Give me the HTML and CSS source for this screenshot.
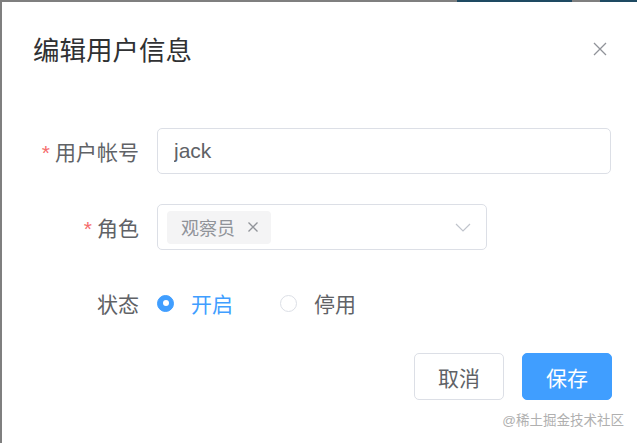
FILE: index.html
```html
<!DOCTYPE html>
<html lang="zh-CN">
<head>
  <meta charset="UTF-8" />
  <meta name="viewport" content="width=device-width, initial-scale=1.0" />
  <title>编辑用户信息</title>
  <link rel="stylesheet" href="styles.css">
</head>
<body>
  <div class="dialog">
    <div class="dialog-header">
      <span class="dialog-title">编辑用户信息</span>
      <button type="button" class="dialog-close">
        <svg width="14" height="14" viewBox="0 0 14 14"><path d="M1 1L13 13M13 1L1 13" stroke="#909399" stroke-width="1.3" fill="none"/></svg>
      </button>
    </div>

    <form class="user-form">
      <div class="form-row">
        <label class="form-label required" for="account">用户帐号</label>
        <div class="input-box">
          <input type="text" id="account" value="jack" />
        </div>
      </div>

      <div class="form-row">
        <label class="form-label required">角色</label>
        <div class="select-box">
          <span class="tag">观察员
            <svg width="12" height="12" viewBox="0 0 12 12"><path d="M1.5 1.5L10.5 10.5M10.5 1.5L1.5 10.5" stroke="#909399" stroke-width="1.3" fill="none"/></svg>
          </span>
          <svg class="arrow" width="16" height="9" viewBox="0 0 16 9"><path d="M1 1L8 8L15 1" stroke="#c0c4cc" stroke-width="1.2" fill="none"/></svg>
        </div>
      </div>

      <div class="form-row">
        <label class="form-label">状态</label>
        <div class="radio-group">
          <span class="radio checked"><span class="radio-dot"></span>开启</span>
          <span class="radio"><span class="radio-dot"></span>停用</span>
        </div>
      </div>
    </form>

    <div class="dialog-footer">
      <button type="button" class="btn">取消</button>
      <button type="button" class="btn btn-primary">保存</button>
    </div>
  </div>

  <div class="watermark">@稀土掘金技术社区</div>
</body>
</html>
```

FILE: styles.css
```css
    body {
      margin: 0;
      height: 100vh;
      overflow: hidden;
      font-family: "Liberation Sans", "Noto Sans CJK SC", sans-serif;
      color: #606266;
      background: linear-gradient(to right, #7f7f7f 457px, #1e4a62 457px, #1e4a62 572px, #7f7f7f 572px, #7f7f7f 600px, #1e4a62 600px) top / 100% 2px no-repeat, #7f7f7f;
    }
    .dialog {
      background: #fff;
      margin: 2px 0 0 2px;
      height: calc(100vh - 2px);
      box-sizing: border-box;
    }
    .dialog-header {
      display: flex;
      justify-content: space-between;
      align-items: center;
      padding: 31px 25px 0 31px;
    }
    .dialog-title {
      font-size: 26.5px;
      line-height: 36px;
      color: #303133;
    }
    .dialog-close {
      width: 24px;
      height: 24px;
      padding: 0;
      border: none;
      background: none;
      display: flex;
      align-items: center;
      justify-content: center;
      margin-bottom: 4px;
      cursor: pointer;
    }
    .user-form {
      margin-top: 59px;
      padding-right: 26px;
    }
    .form-row {
      display: flex;
      align-items: center;
      height: 46px;
      margin-bottom: 30px;
    }
    .form-row:last-child {
      margin-bottom: 0;
    }
    .form-label {
      width: 137px;
      margin-right: 18px;
      text-align: right;
      font-size: 21px;
      color: #606266;
    }
    .form-label.required::before {
      content: "*";
      color: #f56c6c;
      margin-right: 5px;
    }
    .input-box {
      flex: 1;
      height: 46px;
      border: 1px solid #dcdfe6;
      border-radius: 5px;
      box-sizing: border-box;
      display: flex;
    }
    .input-box input {
      width: 100%;
      border: none;
      outline: none;
      background: none;
      padding: 0 16px;
      font-family: inherit;
      font-size: 21px;
      color: #606266;
    }
    .select-box {
      width: 330px;
      height: 46px;
      border: 1px solid #dcdfe6;
      border-radius: 5px;
      box-sizing: border-box;
      display: flex;
      align-items: center;
      padding: 0 15px 0 9px;
    }
    .tag {
      display: flex;
      align-items: center;
      gap: 12px;
      height: 33px;
      padding: 0 12px 0 14px;
      background: #f4f4f5;
      border-radius: 4px;
      box-sizing: border-box;
      font-size: 18px;
      color: #909399;
    }
    .arrow {
      margin-left: auto;
    }
    .radio-group {
      display: flex;
      align-items: center;
    }
    .radio {
      display: flex;
      align-items: center;
      font-size: 21px;
      color: #606266;
      margin-right: 47px;
    }
    .radio-dot {
      width: 17px;
      height: 17px;
      border: 1px solid #dcdfe6;
      border-radius: 50%;
      box-sizing: border-box;
      margin-right: 17px;
      position: relative;
    }
    .radio.checked {
      color: #409eff;
    }
    .radio.checked .radio-dot {
      background: #409eff;
      border-color: #409eff;
    }
    .radio.checked .radio-dot::after {
      content: "";
      position: absolute;
      width: 6px;
      height: 6px;
      border-radius: 50%;
      background: #fff;
      left: 4.5px;
      top: 4.5px;
    }
    .dialog-footer {
      display: flex;
      justify-content: flex-end;
      gap: 18px;
      padding: 0 25px 0 0;
      margin-top: 27px;
    }
    .btn {
      width: 90px;
      height: 47px;
      border: 1px solid #dcdfe6;
      border-radius: 5px;
      background: #fff;
      color: #606266;
      font-family: inherit;
      font-size: 21px;
      cursor: pointer;
    }
    .btn-primary {
      background: #409eff;
      border-color: #409eff;
      color: #fff;
    }
    .watermark {
      position: absolute;
      right: 13px;
      top: 411px;
      font-size: 13.5px;
      line-height: 20px;
      color: #b0b0b0;
    }
```
